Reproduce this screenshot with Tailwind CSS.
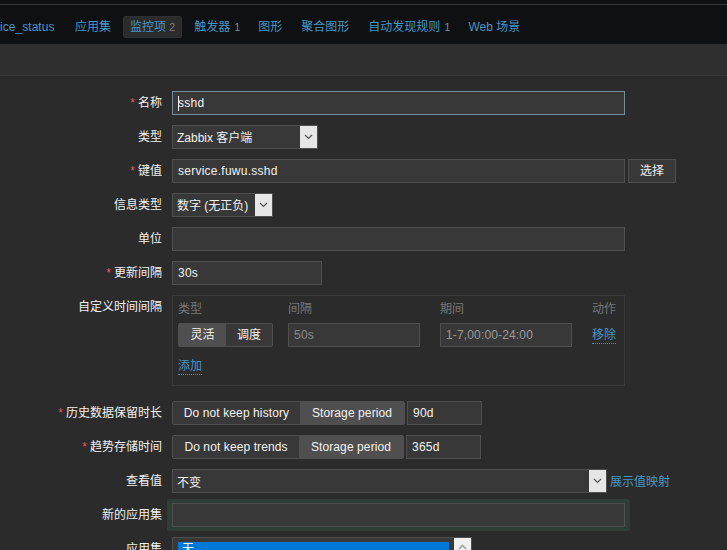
<!DOCTYPE html>
<html lang="zh">
<head>
<meta charset="utf-8">
<script src="https://cdn.jsdelivr.net/npm/@tailwindcss/browser@4"></script>
</head>
<body class="w-[727px] h-[550px] overflow-hidden bg-[#2b2b2b] text-[#f2f2f2] text-[12px] leading-[14px] font-['Liberation_Sans','Noto_Sans_CJK_SC',sans-serif]">
<div class="h-[4px] bg-[#0e1012] border-b border-[#383838] box-content"></div>
<nav class="h-[39px] bg-[#0e1012] flex items-center gap-[5px] text-[#4796c4] overflow-hidden pt-[5px]">
  <a class="w-[56px] shrink-0 mr-[7px] tracking-[0.05px]">ice_status</a>
  <a class="px-[7px] py-[4px]">应用集</a>
  <a class="px-[6px] h-[22px] flex items-center rounded-[2px] bg-[#2b2b2b] border border-[#303030]">监控项<span class="ml-[3px] text-[11px] text-[#7a7a7a]">2</span></a>
  <a class="px-[7px] py-[4px]">触发器<span class="ml-[4px] text-[11px] text-[#768d99]">1</span></a>
  <a class="px-[7px] py-[4px] ml-[-1px]">图形</a>
  <a class="px-[7px] py-[4px]">聚合图形</a>
  <a class="px-[7px] py-[4px]">自动发现规则<span class="ml-[4px] text-[11px] text-[#768d99]">1</span></a>
  <a class="px-[7px] py-[4px] ml-[-1px]">Web 场景</a>
</nav>
<div class="h-[32px] bg-[#2f2f2f] border-b border-[#383838]"></div>
<main class="pt-[15px] flex flex-col gap-[10px]">
  <div class="flex gap-[10px] items-start">
    <label class="w-[162px] h-[24px] flex items-center justify-end"><span class="text-[#e45959] mr-[3px]">*</span>名称</label>
    <div class="relative w-[453px] h-[24px] bg-[#383838] border border-[#768d99] px-[5px] flex items-center tracking-[0.25px]">sshd<span class="absolute left-[5px] top-[4px] w-px h-[15px] bg-[#f2f2f2]"></span></div>
  </div>
  <div class="flex gap-[10px]">
    <label class="w-[162px] h-[24px] flex items-center justify-end">类型</label>
    <div class="w-[146px] h-[24px] bg-[#383838] border border-[#4f4f4f] flex items-center pl-[4px] justify-between"><span class="pt-[2px]">Zabbix 客户端</span>
      <span class="w-[17px] h-[22px] bg-[#e6e6e6] flex items-center justify-center"><svg width="9" height="6" viewBox="0 0 9 6" fill="none" stroke="#555" stroke-width="1.2"><path d="M1 1l3.5 3.5L8 1"/></svg></span></div>
  </div>
  <div class="flex gap-[10px]">
    <label class="w-[162px] h-[24px] flex items-center justify-end"><span class="text-[#e45959] mr-[3px]">*</span>键值</label>
    <div class="w-[453px] h-[24px] bg-[#383838] border border-[#4f4f4f] px-[5px] flex items-center tracking-[0.25px]">service.fuwu.sshd</div>
    <div class="ml-[-7px] w-[48px] h-[24px] bg-[#383838] border border-[#4f4f4f] flex items-center justify-center">选择</div>
  </div>
  <div class="flex gap-[10px]">
    <label class="w-[162px] h-[24px] flex items-center justify-end">信息类型</label>
    <div class="w-[101px] h-[24px] bg-[#383838] border border-[#4f4f4f] flex items-center pl-[4px] justify-between"><span class="whitespace-nowrap pt-[2px]">数字 (无正负)</span>
      <span class="w-[17px] h-[22px] shrink-0 bg-[#e6e6e6] flex items-center justify-center"><svg width="9" height="6" viewBox="0 0 9 6" fill="none" stroke="#555" stroke-width="1.2"><path d="M1 1l3.5 3.5L8 1"/></svg></span></div>
  </div>
  <div class="flex gap-[10px]">
    <label class="w-[162px] h-[24px] flex items-center justify-end">单位</label>
    <div class="w-[453px] h-[24px] bg-[#383838] border border-[#4f4f4f]"></div>
  </div>
  <div class="flex gap-[10px]">
    <label class="w-[162px] h-[24px] flex items-center justify-end"><span class="text-[#e45959] mr-[3px]">*</span>更新间隔</label>
    <div class="w-[150px] h-[24px] bg-[#383838] border border-[#4f4f4f] px-[5px] flex items-center tracking-[0.25px]">30s</div>
  </div>
  <div class="flex gap-[10px]">
    <label class="w-[162px] h-[24px] flex items-center justify-end">自定义时间间隔</label>
    <div class="w-[453px] h-[91px] border border-[#383838] px-[5px] pt-[6px]">
      <div class="grid grid-cols-[110px_152px_152px_24px] text-[#777777] h-[21px]">
        <span>类型</span><span>间隔</span><span>期间</span><span>动作</span>
      </div>
      <div class="grid grid-cols-[110px_152px_152px_24px] items-center h-[24px]">
        <div class="flex w-[95px] h-[24px] border border-[#4f4f4f] rounded-[2px] bg-[#383838]">
          <span class="w-[47px] bg-[#4f4f4f] flex items-center justify-center">灵活</span>
          <span class="flex-1 flex items-center justify-center">调度</span>
        </div>
        <div class="w-[132px] h-[24px] bg-[#383838] border border-[#4f4f4f] px-[5px] flex items-center text-[#8a8a8a] tracking-[0.25px]">50s</div>
        <div class="w-[132px] h-[24px] bg-[#383838] border border-[#4f4f4f] px-[5px] flex items-center text-[#9a9a9a] tracking-[0.15px]">1-7,00:00-24:00</div>
        <a class="mt-[2px] text-[#4796c4] border-b border-dotted border-[#4796c4] leading-[15px] justify-self-start">移除</a>
      </div>
      <a class="inline-block mt-[12px] text-[#4796c4] border-b border-dotted border-[#4796c4] leading-[15px]">添加</a>
    </div>
  </div>
  <div class="flex gap-[10px] mt-[5px]">
    <label class="w-[162px] h-[24px] flex items-center justify-end"><span class="text-[#e45959] mr-[3px]">*</span>历史数据保留时长</label>
    <div class="flex w-[233px] h-[24px] border border-[#4f4f4f] rounded-[2px] bg-[#383838]">
      <span class="w-[127px] flex items-center justify-center tracking-[0.1px]">Do not keep history</span>
      <span class="flex-1 bg-[#4f4f4f] flex items-center justify-center tracking-[0.1px]">Storage period</span>
    </div>
    <div class="ml-[-8px] w-[75px] h-[24px] bg-[#383838] border border-[#4f4f4f] px-[5px] flex items-center tracking-[0.25px]">90d</div>
  </div>
  <div class="flex gap-[10px]">
    <label class="w-[162px] h-[24px] flex items-center justify-end"><span class="text-[#e45959] mr-[3px]">*</span>趋势存储时间</label>
    <div class="flex w-[232px] h-[24px] border border-[#4f4f4f] rounded-[2px] bg-[#383838]">
      <span class="w-[126px] flex items-center justify-center tracking-[0.1px]">Do not keep trends</span>
      <span class="flex-1 bg-[#4f4f4f] flex items-center justify-center tracking-[0.1px]">Storage period</span>
    </div>
    <div class="ml-[-8px] w-[75px] h-[24px] bg-[#383838] border border-[#4f4f4f] px-[5px] flex items-center tracking-[0.25px]">365d</div>
  </div>
  <div class="flex gap-[10px] items-center">
    <label class="w-[162px] h-[24px] flex items-center justify-end">查看值</label>
    <div class="w-[435px] h-[24px] bg-[#383838] border border-[#4f4f4f] flex items-center pl-[4px] justify-between"><span class="pt-[3px]">不变</span>
      <span class="w-[17px] h-[22px] bg-[#e6e6e6] flex items-center justify-center"><svg width="9" height="6" viewBox="0 0 9 6" fill="none" stroke="#555" stroke-width="1.2"><path d="M1 1l3.5 3.5L8 1"/></svg></span></div>
    <a class="ml-[-7px] pt-[2px] text-[#4796c4]">展示值映射</a>
  </div>
  <div class="flex gap-[10px]">
    <label class="w-[162px] h-[24px] flex items-center justify-end">新的应用集</label>
    <div class="mx-[-5px] my-[-4px] px-[5px] py-[4px] bg-[#2e3d35] rounded-[2px]">
      <div class="w-[453px] h-[24px] bg-[#383838] border border-[#4f4f4f]"></div>
    </div>
  </div>
  <div class="flex gap-[10px]">
    <label class="w-[162px] h-[24px] flex items-center justify-end">应用集</label>
    <div class="w-[300px] h-[40px] bg-[#383838] border border-[#4f4f4f] flex pl-[5px] pt-[4px] justify-between">
      <div class="w-[271px] h-[20px] bg-[#0078d7] pl-[4px]">无</div>
      <span class="w-[17px] h-[18px] mt-[-4px] bg-[#f0f0f0] flex items-center justify-center"><svg width="9" height="6" viewBox="0 0 9 6" fill="none" stroke="#a0a0a0" stroke-width="1.6"><path d="M1 5l3.5-3.5L8 5"/></svg></span>
    </div>
  </div>
</main>
</body>
</html>
